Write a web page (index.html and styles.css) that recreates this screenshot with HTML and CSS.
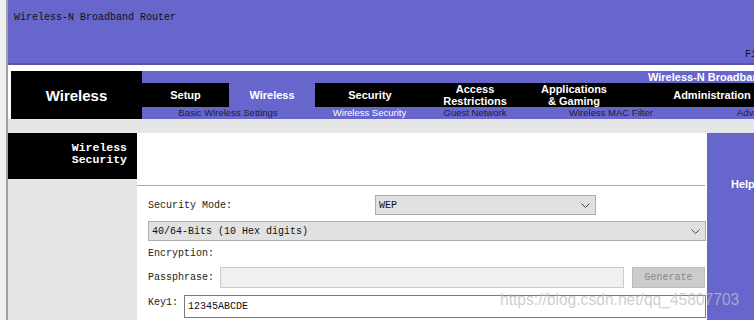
FILE: index.html
```html
<!DOCTYPE html>
<html lang="en">
<head>
  <meta charset="UTF-8">
  <meta name="viewport" content="width=device-width, initial-scale=1.0">
  <title>Wireless Security</title>
  <link rel="stylesheet" href="styles.css">
</head>
<body>
  <div class="page">
    <div class="banner">
      <div class="banner-title">Wireless-N Broadband Router</div>
      <div class="banner-fw">Firmware Version: v1.0.00</div>
    </div>

    <div class="nav">
      <div class="nav-section">Wireless</div>
      <div class="nav-main">
        <div class="nav-product">Wireless-N Broadband Router</div>
        <div class="nav-tabs">
          <div class="tab tab-setup">Setup</div>
          <div class="tab tab-wireless active">Wireless</div>
          <div class="tab tab-security">Security</div>
          <div class="tab tab-access">Access<br>Restrictions</div>
          <div class="tab tab-apps">Applications<br>&amp; Gaming</div>
          <div class="tab tab-admin">Administration</div>
        </div>
        <div class="nav-sub">
          <span>Basic Wireless Settings</span>
          <span class="current">Wireless Security</span>
          <span>Guest Network</span>
          <span>Wireless MAC Filter</span>
          <span>Advanced Wireless Settings</span>
        </div>
      </div>
    </div>

    <div class="strip"></div>

    <div class="main">
      <div class="side">
        <div class="side-title">Wireless<br>Security</div>
      </div>

      <div class="content">
        <div class="content-top"></div>
        <div class="form">
          <div class="row row-mode">
            <label class="label label-mode">Security Mode:</label>
            <div class="select-wrap select-mode">
              <select class="select">
                <option>WEP</option>
              </select>
              <svg class="chevron" width="9" height="5" viewBox="0 0 9 5"><path d="M0.5 0.5 L4.5 4.5 L8.5 0.5" fill="none" stroke="#444" stroke-width="1"/></svg>
            </div>
          </div>

          <div class="row row-bits">
            <div class="select-wrap select-bits">
              <select class="select">
                <option>40/64-Bits (10 Hex digits)</option>
              </select>
              <svg class="chevron" width="9" height="5" viewBox="0 0 9 5"><path d="M0.5 0.5 L4.5 4.5 L8.5 0.5" fill="none" stroke="#444" stroke-width="1"/></svg>
            </div>
          </div>

          <div class="row row-enc">
            <label class="label">Encryption:</label>
          </div>

          <div class="row row-pass">
            <label class="label label-pass">Passphrase:</label>
            <input class="input input-pass" type="text" disabled>
            <button class="btn-generate" disabled>Generate</button>
          </div>

          <div class="row row-key">
            <label class="label label-key">Key1:</label>
            <input class="input input-key" type="text" value="12345ABCDE">
          </div>
        </div>
      </div>

      <div class="help">Help...</div>
    </div>

    <div class="watermark">https://blog.csdn.net/qq_45807703</div>
  </div>
</body>
</html>
```

FILE: styles.css
```css
body {
  margin: 0;
  padding: 0;
  background-color: #efefef;
  overflow: hidden;
  font-family: 'Liberation Mono', 'DejaVu Sans Mono', monospace;
}

.page {
  position: relative;
  margin-left: 6px;
  width: 900px;
  min-height: 320px;
  border-left: 2px solid #a0a0a0;
  background: white;
}

/* top banner */
.banner {
  height: 63px;
  background-color: #6666cc;
  border-bottom: 2px solid #5656a8;
  display: flex;
  flex-direction: column;
  justify-content: space-between;
  font-size: 10px;
  color: #111;
}

.banner-title {
  padding: 12px 0 0 6px;
}

.banner-fw {
  padding: 0 0 3px 737px;
  white-space: nowrap;
}

/* navigation */
.nav {
  display: flex;
  margin-top: 6px;
  padding-left: 3px;
  height: 48px;
  font-family: 'Liberation Sans', Arial, sans-serif;
}

.nav-section {
  width: 131px;
  flex-shrink: 0;
  background: black;
  color: white;
  font-weight: bold;
  font-size: 15px;
  display: flex;
  align-items: center;
  justify-content: center;
}

.nav-main {
  flex: 1;
  display: flex;
  flex-direction: column;
  background-color: #6666cc;
}

.nav-product {
  height: 12px;
  line-height: 12px;
  padding-left: 506px;
  color: white;
  font-weight: bold;
  font-size: 11px;
  white-space: nowrap;
}

.nav-tabs {
  height: 24px;
  display: flex;
  background: black;
}

.tab {
  display: flex;
  align-items: center;
  justify-content: center;
  text-align: center;
  color: white;
  font-weight: bold;
  font-size: 11px;
  line-height: 12px;
}

.tab.active {
  background-color: #6666cc;
}

.tab-setup { width: 87px; }
.tab-wireless { width: 86px; }
.tab-security { width: 110px; }
.tab-access { width: 100px; }
.tab-apps { width: 98px; }
.tab-admin { width: 178px; }

.nav-sub {
  height: 12px;
  display: grid;
  grid-template-columns: 172px 111px 100px 172px 198px;
  font-size: 9.5px;
  line-height: 12px;
  color: #1c1c3c;
}

.nav-sub span {
  text-align: center;
  white-space: nowrap;
}

.nav-sub .current {
  color: white;
}

.strip {
  height: 14px;
  background: #e6e6e6;
}

/* main area */
.main {
  display: flex;
  min-height: 190px;
}

.side {
  width: 129px;
  flex-shrink: 0;
  background: #e6e6e6;
}

.side-title {
  height: 46px;
  box-sizing: border-box;
  background: black;
  color: white;
  font-weight: bold;
  font-size: 11.5px;
  line-height: 12px;
  text-align: right;
  padding: 9px 10px 0 0;
}

.content {
  width: 570px;
  flex-shrink: 0;
}

.content-top {
  height: 52px;
  margin-right: 2px;
  border-bottom: 1px solid #a9a9a9;
}

.form {
  padding: 8px 1px 0 11px;
  font-size: 10px;
  color: #222;
}

.row {
  display: flex;
  align-items: center;
}

.row-mode { height: 20px; margin-top: 1px; }
.row-bits { height: 20px; margin-top: 6px; }
.row-enc { height: 20px; margin-top: 2px; }
.row-pass { height: 21px; margin-top: 4px; }
.row-key { height: 23px; margin-top: 7px; align-items: flex-start; }

.label-mode { width: 227px; flex-shrink: 0; }
.label-pass { width: 72px; flex-shrink: 0; }
.label-key { width: 36px; flex-shrink: 0; padding-top: 2px; }

.select-wrap {
  position: relative;
  height: 100%;
}

.select-mode { width: 221px; }
.select-bits { width: 558px; }

.select {
  appearance: none;
  -webkit-appearance: none;
  width: 100%;
  height: 100%;
  margin: 0;
  padding: 0 0 0 3px;
  border: 1px solid #adadad;
  background: #e1e1e1;
  font-family: inherit;
  font-size: 10px;
  color: #111;
}

.chevron {
  position: absolute;
  right: 6px;
  top: 8px;
}

.input {
  box-sizing: border-box;
  height: 100%;
  margin: 0;
  padding: 0 3px;
  font-family: inherit;
  font-size: 10px;
  color: #111;
}

.input-pass {
  width: 404px;
  border: 1px solid #cccccc;
  background: #f0f0f0;
}

.input-key {
  width: 522px;
  border: 1px solid #7a7a7a;
  background: white;
}

.btn-generate {
  margin-left: 8px;
  width: 73px;
  height: 21px;
  padding: 0;
  border: 1px solid #bcbcbc;
  background: #cccccc;
  color: #8a8a8a;
  font-family: inherit;
  font-size: 10px;
}

.help {
  flex: 1;
  background-color: #6666cc;
  color: white;
  font-family: 'Liberation Sans', Arial, sans-serif;
  font-weight: bold;
  font-size: 11px;
  padding: 45px 0 0 24px;
}

.watermark {
  position: absolute;
  left: 492px;
  top: 291px;
  font-family: 'Liberation Sans', Arial, sans-serif;
  font-size: 15.6px;
  color: rgba(190, 190, 190, 0.75);
  white-space: nowrap;
}
```
